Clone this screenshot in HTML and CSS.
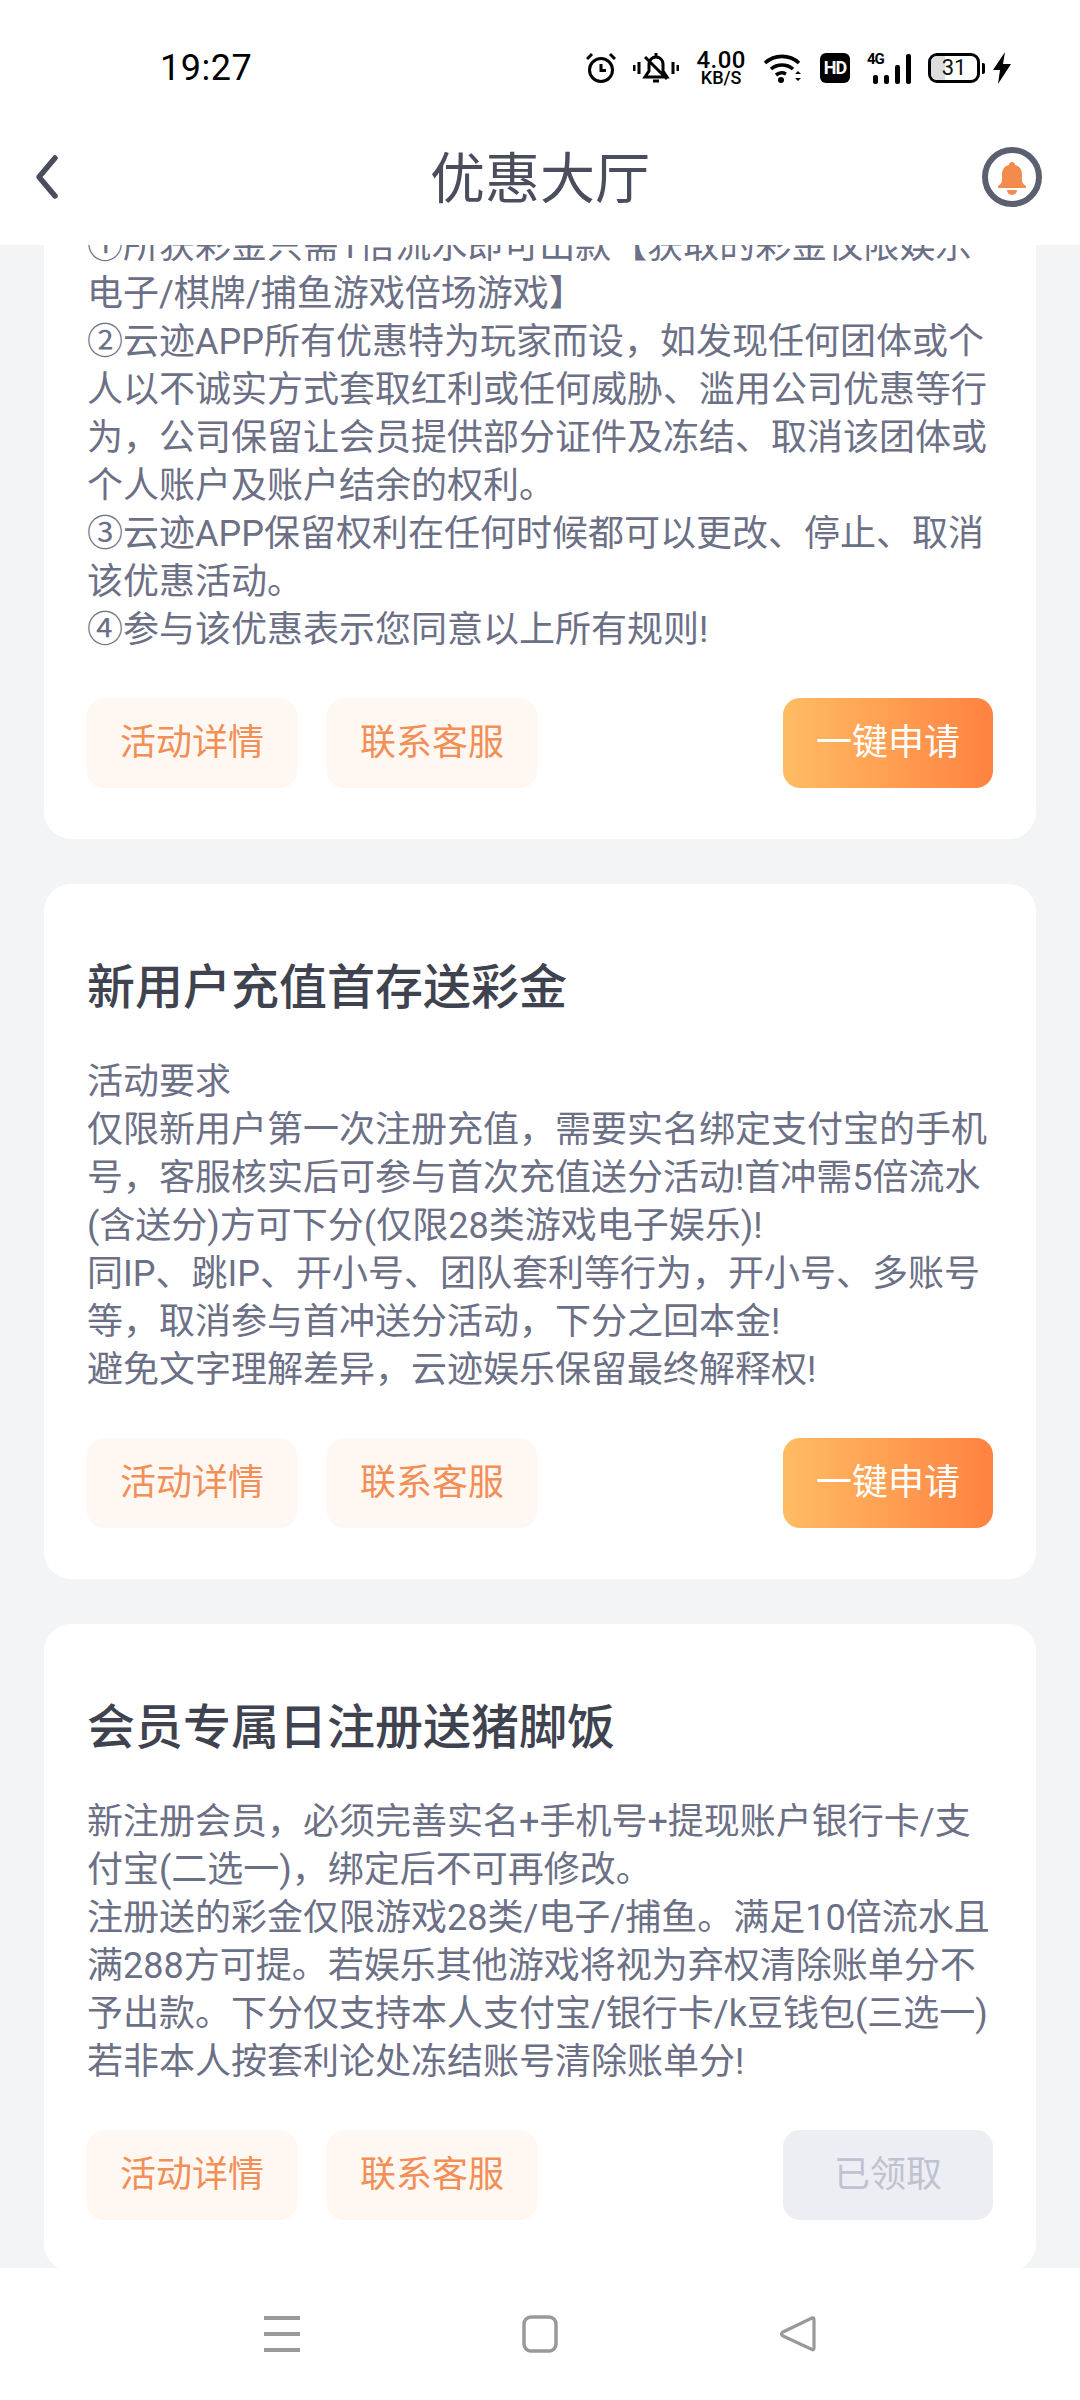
FILE: index.html
```html
<!DOCTYPE html>
<html lang="zh-CN">
<head>
<meta charset="utf-8">
<title>优惠大厅</title>
<link rel="stylesheet" href="styles.css">
</head>
<body>
<div class="app">
  <header class="top">
    <div class="status">
      <span class="clock">19:27</span>
      <div class="sys">
        <svg class="ic-alarm" viewBox="0 0 30 32" width="30" height="32"><circle cx="15" cy="18" r="11.5" fill="none" stroke="#000" stroke-width="3"/><path d="M15 12v6.5h5" fill="none" stroke="#000" stroke-width="3"/><path d="M1 7l5-5M29 7l-5-5" stroke="#000" stroke-width="3"/></svg>
        <svg class="ic-mute" viewBox="0 0 46 32" width="46" height="32"><path d="M1 13v6M6 10v12M40 10v12M45 13v6" stroke="#000" stroke-width="3"/><path d="M12 25h22l-4-6v-7a7 7 0 0 0-14 0v7zM12 5l22 22M23 1v4M20 29h6" fill="none" stroke="#000" stroke-width="3"/></svg>
        <div class="speed"><span class="speed-n">4.00</span><span class="speed-u">KB/S</span></div>
        <svg class="ic-wifi" viewBox="0 0 40 30" width="40" height="30"><path d="M2 10a25 25 0 0 1 34 0M8 16a17 17 0 0 1 22 0M13 22a9 9 0 0 1 10-1" fill="none" stroke="#000" stroke-width="3.6"/><circle cx="18" cy="27" r="3"/><path d="M32 21l3-3 3 3zM32 25l3 3 3-3z"/></svg>
        <span class="hd">HD</span>
        <div class="net">
          <span class="net-t">4G</span>
          <svg viewBox="0 0 38 30" width="38" height="30"><rect x="0" y="21" width="5" height="9" rx="2"/><rect x="11" y="21" width="5" height="9" rx="2"/><rect x="22" y="11" width="5" height="19" rx="2"/><rect x="33" y="0" width="5" height="30" rx="2"/></svg>
        </div>
        <div class="batt"><div class="batt-box"><i class="batt-fill"></i><span class="batt-n">31</span></div><i class="batt-tip"></i></div>
        <svg class="ic-bolt" viewBox="0 0 20 32" width="20" height="32"><path d="M13 0L1 18h7L6 32l13-20h-8z"/></svg>
      </div>
    </div>
    <nav class="bar">
      <svg class="back" viewBox="0 0 28 48" width="28" height="48"><path d="M22 5L6 24l16 19" fill="none" stroke="#4a4e5c" stroke-width="5.5" stroke-linecap="round" stroke-linejoin="round"/></svg>
      <h1 class="title">优惠大厅</h1>
      <svg class="bell" viewBox="0 0 60 60" width="60" height="60"><circle cx="30" cy="30" r="27" fill="none" stroke="#5b6070" stroke-width="6"/><path d="M30 15a3 3 0 0 1 3 3c5 1 7 5 7 10v5c0 3 2 5 4 6v2H16v-2c2-1 4-3 4-6v-5c0-5 2-9 7-10a3 3 0 0 1 3-3z" fill="#f28b4b"/><path d="M25 43h10a5 5 0 0 1-10 0z" fill="#f28b4b"/></svg>
    </nav>
  </header>

  <main class="list">
    <div class="scroll">
      <article class="card card-first">
        <p class="desc">①所获彩金只需1倍流水即可出款【获取的彩金仅限娱乐<br>电子/棋牌/捕鱼游戏倍场游戏】<br>②云迹APP所有优惠特为玩家而设，如发现任何团体或个<br>人以不诚实方式套取红利或任何威胁、滥用公司优惠等行<br>为，公司保留让会员提供部分证件及冻结、取消该团体或<br>个人账户及账户结余的权利。<br>③云迹APP保留权利在任何时候都可以更改、停止、取消<br>该优惠活动。<br>④参与该优惠表示您同意以上所有规则!</p>
        <div class="actions">
          <button class="btn soft">活动详情</button>
          <button class="btn soft">联系客服</button>
          <button class="btn apply">一键申请</button>
        </div>
      </article>
      <article class="card">
        <h2 class="name">新用户充值首存送彩金</h2>
        <p class="desc">活动要求<br>仅限新用户第一次注册充值，需要实名绑定支付宝的手机<br>号，客服核实后可参与首次充值送分活动!首冲需5倍流水<br>(含送分)方可下分(仅限28类游戏电子娱乐)!<br>同IP、跳IP、开小号、团队套利等行为，开小号、多账号<br>等，取消参与首冲送分活动，下分之回本金!<br>避免文字理解差异，云迹娱乐保留最终解释权!</p>
        <div class="actions">
          <button class="btn soft">活动详情</button>
          <button class="btn soft">联系客服</button>
          <button class="btn apply">一键申请</button>
        </div>
      </article>
      <article class="card">
        <h2 class="name">会员专属日注册送猪脚饭</h2>
        <p class="desc">新注册会员，必须完善实名+手机号+提现账户银行卡/支<br>付宝(二选一)，绑定后不可再修改。<br>注册送的彩金仅限游戏28类/电子/捕鱼。满足10倍流水且<br>满288方可提。若娱乐其他游戏将视为弃权清除账单分不<br>予出款。下分仅支持本人支付宝/银行卡/k豆钱包(三选一)<br>若非本人按套利论处冻结账号清除账单分!</p>
        <div class="actions">
          <button class="btn soft">活动详情</button>
          <button class="btn soft">联系客服</button>
          <button class="btn done">已领取</button>
        </div>
      </article>
    </div>
  </main>

  <footer class="navkeys">
    <svg viewBox="0 0 38 38" width="38" height="38"><path d="M1 3h36M1 19h36M1 35h36" stroke="#999" stroke-width="4"/></svg>
    <svg viewBox="0 0 38 38" width="38" height="38"><rect x="3" y="2" width="32" height="34" rx="7" fill="none" stroke="#999" stroke-width="3.5"/></svg>
    <svg viewBox="0 0 38 38" width="38" height="38"><path d="M33 3Q35 2 35 5V33Q35 36 32 34L4 21Q1 19 4 17Z" fill="none" stroke="#999" stroke-width="3.2" stroke-linejoin="round"/></svg>
  </footer>
</div>
</body>
</html>
```

FILE: styles.css
```css
* { box-sizing: border-box; }
html, body { margin: 0; padding: 0; }
body {
  width: 1080px;
  height: 2400px;
  overflow: hidden;
  font-family: "Roboto", "Noto Sans CJK SC", sans-serif;
  background: #f3f4f6;
}
.app { height: 2400px; display: flex; flex-direction: column; }

.top { height: 245px; flex: none; background: #fff; display: flex; flex-direction: column; }
.status {
  height: 135px;
  padding: 34px 68px 0 160px;
  display: flex;
  justify-content: space-between;
  align-items: flex-start;
  color: #000;
}
.clock { font-size: 36px; line-height: 68px; letter-spacing: 0.5px; }
.sys { display: flex; align-items: center; height: 68px; gap: 17px; }
.speed { display: flex; flex-direction: column; align-items: center; }
.speed-n { font-size: 24px; font-weight: 500; line-height: 20px; letter-spacing: 0.5px; }
.speed-u { font-size: 18px; font-weight: 500; line-height: 16px; }
.hd {
  width: 30px; height: 30px; border-radius: 6px; background: #000; color: #fff;
  font-size: 18px; font-weight: 700; line-height: 30px; text-align: center; letter-spacing: -1px;
}
.net { display: flex; align-items: flex-end; height: 32px; position: relative; width: 44px; }
.net svg { margin-left: 6px; }
.net-t { position: absolute; left: 0; top: 0; font-size: 15px; font-weight: 700; line-height: 14px; letter-spacing: -1px; }
.batt { display: flex; align-items: center; gap: 2px; }
.batt-box {
  width: 52px; height: 30px; border: 3px solid #000; border-radius: 9px;
  position: relative; overflow: hidden; text-align: center;
}
.batt-fill { position: absolute; left: 0; top: 0; bottom: 0; width: 31%; background: #ddd; }
.batt-n { position: relative; display: block; font-size: 22px; line-height: 24px; color: #111; }
.batt-tip { width: 3px; height: 11px; background: #000; border-radius: 0 2px 2px 0; }
.ic-bolt { margin-left: -10px; }

.bar { flex: 1; display: flex; align-items: center; justify-content: space-between; padding: 0 38px 26px 33px; position: relative; }
.title {
  position: absolute; left: 0; right: 0; top: 14px;
  margin: 0; text-align: center;
  font-size: 55px; font-weight: 400; line-height: 60px; color: #4a4e5c;
}

.list { flex: 1; min-height: 0; overflow: hidden; }
.scroll { margin-top: -85px; padding: 0 44px; display: flex; flex-direction: column; gap: 45px; }

.card { background: #fff; border-radius: 27px; padding: 64px 43px 51px; }
.card-first { padding-top: 62px; }
.name { margin: 0 0 30px; font-size: 48px; font-weight: 500; line-height: 80px; color: #3f4350; }
.desc { margin: 0; font-size: 36px; line-height: 48px; color: #6c7086; white-space: nowrap; }
.actions { display: flex; gap: 30px; margin-top: 44px; }
.btn {
  width: 210px; height: 90px; border: 0; border-radius: 17px; padding: 0;
  font: inherit; font-size: 36px; line-height: 90px; text-align: center;
}
.soft { background: #fff8f2; color: #f28f56; }
.apply { margin-left: auto; background: linear-gradient(90deg, #ffbc63, #ff8241); color: #fff; }
.done { margin-left: auto; background: #edeef4; color: #bfc2d0; }

.navkeys {
  height: 132px; flex: none; background: #fff; display: flex; justify-content: center; gap: 220px;
  padding-top: 47px; align-items: flex-start;
}
```
